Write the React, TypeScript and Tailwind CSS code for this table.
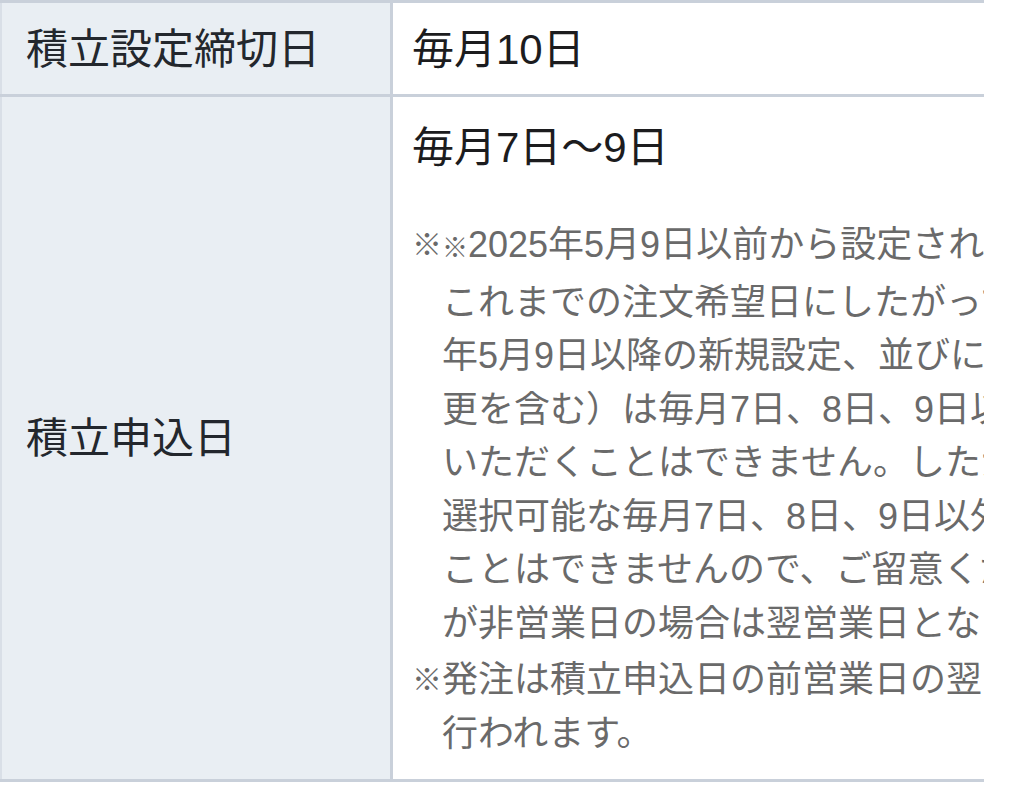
import React from "react";

const font = "font-['Liberation_Sans','Noto_Sans_CJK_JP',sans-serif]";

const note1 = [
  "※2025年5月9日以前から設定されている積立は、",
  "これまでの注文希望日にしたがって発注されます。",
  "年5月9日以降の新規設定、並びに積立設定の変",
  "更を含む）は毎月7日、8日、9日以外を指定して",
  "いただくことはできません。したがって、",
  "選択可能な毎月7日、8日、9日以外を指定する",
  "ことはできませんので、ご留意ください。なお",
  "が非営業日の場合は翌営業日となります。",
];

export default function App() {
  return (
    <div className={`w-[1028px] h-[788px] bg-white overflow-hidden ${font}`}>
      <div className="w-[984px] border-t-[3px] border-b-[3px] border-[#c9d0da] overflow-hidden">
        {/* Row 1 */}
        <div className="flex h-[94px] border-b-[3px] border-[#c9d0da]">
          <div className="w-[390px] shrink-0 bg-[#e9eef3] border-l-2 border-[#d9dfe7] flex items-center pl-[24px] pt-[2px] text-[42px] text-[#23272d] whitespace-nowrap">
            積立設定締切日
          </div>
          <div className="flex-1 min-w-0 border-l-[3px] border-[#c9d0da] flex items-center pl-[19px] pt-[2px] text-[42px] text-[#1c1c1e] whitespace-nowrap">
            毎月10日
          </div>
        </div>
        {/* Row 2 */}
        <div className="flex h-[682px]">
          <div className="w-[390px] shrink-0 bg-[#e9eef3] border-l-2 border-[#d9dfe7] flex items-center pl-[24px] text-[42px] text-[#23272d] whitespace-nowrap">
            積立申込日
          </div>
          <div className="flex-1 min-w-0 overflow-hidden border-l-[3px] border-[#c9d0da] pl-[19px] pt-[22px]">
            <div className="text-[42px] leading-[58px] text-[#1c1c1e] whitespace-nowrap">
              毎月7日〜9日
            </div>
            <div className="mt-[41px] text-[36px] leading-[53.5px] text-[#6a6a6a]">
              <div className="flex">
                <span className="w-[30px] shrink-0 text-[30px]">※</span>
                <div className="whitespace-nowrap">
                  {note1.map((l, i) => (
                    <div key={i}>
                      {i === 0 ? (
                        <>
                          <span className="text-[26px]">※</span>
                          {l.slice(1)}
                        </>
                      ) : (
                        l
                      )}
                    </div>
                  ))}
                </div>
              </div>
              <div className="flex mt-[3px]">
                <span className="w-[30px] shrink-0 text-[30px]">※</span>
                <div className="whitespace-nowrap">
                  <div>発注は積立申込日の前営業日の翌営業日に</div>
                  <div>行われます。</div>
                </div>
              </div>
            </div>
          </div>
        </div>
      </div>
    </div>
  );
}
